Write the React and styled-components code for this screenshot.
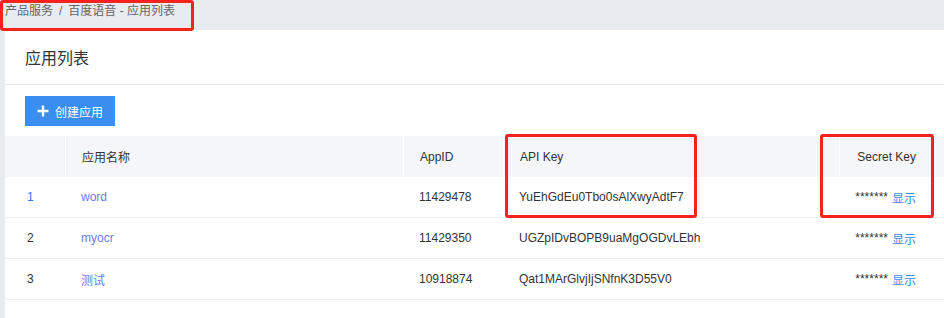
import React from 'react'
import styled, { createGlobalStyle } from 'styled-components'

const GlobalStyle = createGlobalStyle`
  html, body {
    margin: 0;
    padding: 0;
    background: #e8ebf0;
    font-family: "Liberation Sans", "Noto Sans CJK SC", sans-serif;
    font-size: 12px;
    color: #333;
  }
`

const Page = styled.div`
  position: relative;
  width: 944px;
  height: 318px;
  overflow: hidden;
`

const Breadcrumb = styled.div`
  height: 30px;
  line-height: 22px;
  padding-left: 5px;
  color: #666;
  font-size: 12px;
`

const Sep = styled.span`
  margin: 0 6px;
`

const Panel = styled.div`
  margin-left: 5px;
  background: #fff;
  height: 288px;
`

const PanelHead = styled.div`
  height: 55px;
  display: flex;
  align-items: center;
  padding-left: 20px;
  font-size: 16px;
  color: #333;
  border-bottom: 1px solid #e6e6e6;
  box-sizing: border-box;
`

const Toolbar = styled.div`
  padding: 11px 20px 10px;
`

const CreateButton = styled.button`
  display: flex;
  align-items: center;
  gap: 6px;
  width: 90px;
  height: 30px;
  padding: 0 0 0 12px;
  border: 0;
  border-radius: 0;
  background: #3a8ef0;
  color: #fff;
  font-family: inherit;
  font-size: 12px;
`

const Table = styled.div`
  display: grid;
  grid-template-columns: 60px 338px 100px 336px 1fr;
`

const HeadCell = styled.div`
  height: 41px;
  display: flex;
  align-items: center;
  justify-content: ${p => (p.$right ? 'flex-end' : 'flex-start')};
  padding: ${p => (p.$right ? '0 28px 0 0' : `0 0 0 ${p.$pad || 16}px`)};
  background: #f4f6fa;
  border-left: ${p => (p.$first ? '0' : '1px solid #fff')};
  color: #333;
  box-sizing: border-box;
`

const Cell = styled.div`
  height: 41px;
  display: flex;
  align-items: center;
  justify-content: ${p => (p.$right ? 'flex-end' : 'flex-start')};
  padding: ${p => (p.$right ? '0 28px 0 0' : `0 0 0 ${p.$pad || 16}px`)};
  border-bottom: 1px solid #eceef5;
  color: ${p => p.$color || '#333'};
  box-sizing: border-box;
`

const Link = styled.span`
  color: #3b8ced;
  margin-left: 4px;
`

const Mark = styled.div`
  position: absolute;
  left: ${p => p.$x}px;
  top: ${p => p.$y}px;
  width: ${p => p.$w}px;
  height: ${p => p.$h}px;
  border: 3px solid #f5221d;
  border-radius: 3px;
  box-sizing: border-box;
  pointer-events: none;
`

const PlusIcon = () => (
  <svg width="12" height="12" viewBox="0 0 12 12">
    <path d="M6 0.5v11M0.5 6h11" stroke="#fff" strokeWidth="2.4" />
  </svg>
)

const apps = [
  { id: 1, name: 'word', appId: '11429478', key: 'YuEhGdEu0Tbo0sAlXwyAdtF7', active: true },
  { id: 2, name: 'myocr', appId: '11429350', key: 'UGZpIDvBOPB9uaMgOGDvLEbh' },
  { id: 3, name: '测试', appId: '10918874', key: 'Qat1MArGlvjIjSNfnK3D55V0' }
]

export default function App () {
  return (
    <Page>
      <GlobalStyle />
      <Breadcrumb>产品服务<Sep>/</Sep>百度语音 - 应用列表</Breadcrumb>
      <Panel>
        <PanelHead>应用列表</PanelHead>
        <Toolbar>
          <CreateButton><PlusIcon />创建应用</CreateButton>
        </Toolbar>
        <Table>
          <HeadCell $first />
          <HeadCell>应用名称</HeadCell>
          <HeadCell>AppID</HeadCell>
          <HeadCell>API Key</HeadCell>
          <HeadCell $right>Secret Key</HeadCell>
          {apps.map(app => (
            <React.Fragment key={app.id}>
              <Cell $pad={22} $color={app.active ? '#2b7bd6' : '#333'}>{app.id}</Cell>
              <Cell $color='#6680ee'>{app.name}</Cell>
              <Cell>{app.appId}</Cell>
              <Cell>{app.key}</Cell>
              <Cell $right>*******<Link>显示</Link></Cell>
            </React.Fragment>
          ))}
        </Table>
      </Panel>
      <Mark $x={0} $y={0} $w={194} $h={31} />
      <Mark $x={505} $y={134} $w={192} $h={84} />
      <Mark $x={820} $y={134} $w={114} $h={84} />
    </Page>
  )
}
